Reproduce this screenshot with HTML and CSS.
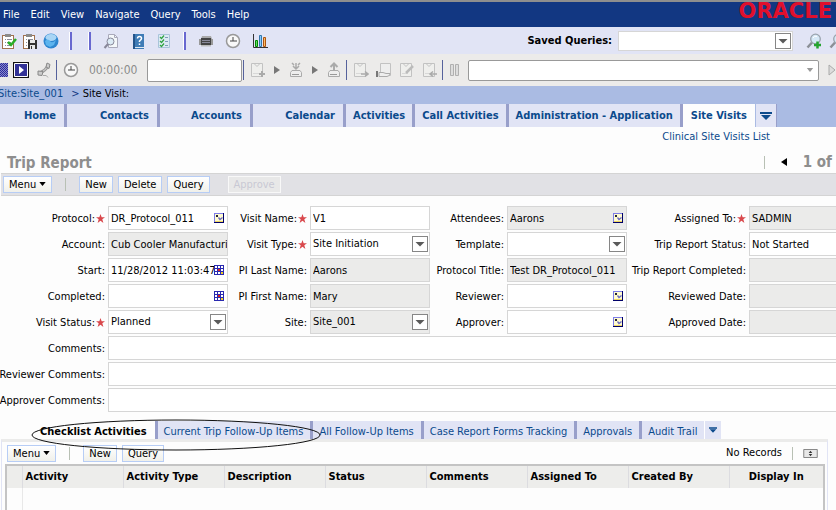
FILE: index.html
```html
<!DOCTYPE html>
<html lang="en">
<head>
    <meta charset="UTF-8">
    <meta name="viewport" content="width=device-width, initial-scale=1.0">
    <title>Site Visits - Trip Report</title>
    <link rel="stylesheet" href="styles.css">
</head>
<body>

    <!-- icon sprites -->
    <svg class="sprites" aria-hidden="true">
        <symbol id="clip" viewBox="0 0 16 16"><rect x="1.5" y="2.5" width="11" height="13" fill="#fff" stroke="#a0714e"/><rect x="4" y="1" width="6" height="3" fill="#8b8b8b"/><path d="M4 6.500h1M6 6.500h5M4 9.500h1M6 9.500h4M4 12.500h1M6 12.500h4" stroke="#8c8c98"/></symbol>
        <symbol id="clock" viewBox="0 0 16 16"><circle cx="8" cy="8" r="6.500" fill="#f8f8f8" stroke="#999" stroke-width="1.500"/><path d="M8 4v4h4M8 8H5" fill="none" stroke="#444"/></symbol>
        <symbol id="lens" viewBox="0 0 16 16"><path d="M1.500 14.500L6 9.500" stroke="#8b8f96" stroke-width="2.500"/><circle cx="9.500" cy="6" r="4.800" fill="#d6e9f7" stroke="#9aa3ad" stroke-width="1.300"/><path d="M7 5a3 3 0 0 1 4-1.500" fill="none" stroke="#fff"/></symbol>
        <symbol id="page" viewBox="0 0 16 16"><path d="M1.500 1.500h11v13h-11z" fill="#efefed" stroke="#c2c2c2"/><path d="M4 1.500l3 3 3-3" fill="none" stroke="#c2c2c2"/><path d="M3 11.500h6" stroke="#d8d8d8"/></symbol>
        <symbol id="tray" viewBox="0 0 16 16"><path d="M2.500 10.500l1.500-2h8l1.500 2v4h-11z" fill="#eee" stroke="#aaa"/><path d="M4 12.500h7" stroke="#999"/></symbol>
        <symbol id="pick" viewBox="0 0 10 10"><rect width="10" height="10" fill="#000068"/><rect width="9" height="9" fill="#7d7de8"/><rect x="1" y="1" width="8" height="8" fill="#fffbd0"/><path d="M2 2h2v2H2z" fill="#223"/><path d="M4.500 4.500l1.500 2 2.500-2" fill="none" stroke="#6a6ac0" stroke-width="1.300"/><path d="M1 8h8v1H1z" fill="#f0d860"/></symbol>
        <symbol id="cal" viewBox="0 0 10 10"><rect width="10" height="10" fill="#2a2ab0"/><path d="M1 1h2v2H1zM4 1h2v2H4zM7 1h2v2H7zM1 4h2v2H1zM7 4h2v2H7zM1 7h2v2H1zM4 7h2v2H4z" fill="#fff"/><path d="M4 4h2v2H4z" fill="#e02020"/><path d="M7 7h2v2H7z" fill="#f3d020"/></symbol>
        <symbol id="drop" viewBox="0 0 16 16"><rect x=".5" y=".5" width="15" height="15" fill="#fff" stroke="#868686"/><path d="M3.500 6h9L8 10.500z" fill="#5a5a5a"/></symbol>
        <symbol id="star" viewBox="0 0 10 10"><path d="M5 0l1.300 3.500H10L7 5.900 8.200 10 5 7.500 1.800 10 3 5.900 0 3.500h3.700z" fill="#d9484c"/></symbol>
        <symbol id="down" viewBox="0 0 8 5"><path d="M0 0h8L4 5z" fill="currentColor"/></symbol>
        <symbol id="more" viewBox="0 0 12 8"><path d="M0 0h12v2H0zM1 3h10L6 8z" fill="#0b4a8c"/></symbol>
        <symbol id="next" viewBox="0 0 6 8"><path d="M0 0l6 4-6 4z" fill="#777"/></symbol>
    </svg>

    <header class="menubar">
        <nav class="menus">
            <a href="#">File</a><a href="#">Edit</a><a href="#">View</a><a href="#">Navigate</a><a href="#">Query</a><a href="#">Tools</a><a href="#">Help</a>
        </nav>
        <span class="brand">ORACLE</span>
    </header>

    <div class="toolbar">
        <div class="group tight">
            <button aria-label="Inbox"><svg viewBox="0 0 16 16"><use href="#clip"/><path d="M7 9l3 3 5-6" fill="none" stroke="#28ae28" stroke-width="2.500"/></svg></button>
            <button aria-label="Save"><svg viewBox="0 0 16 16"><use href="#clip"/><rect x="6" y="7" width="9" height="9" fill="#333"/><path d="M8 7h5v3H8zM8 12h5v4H8z" fill="#e8e8e8"/><path d="M9 13h1v3H9z" fill="#333"/></svg></button>
            <button aria-label="Web"><svg viewBox="0 0 16 16"><circle cx="8" cy="8" r="7.500" fill="#2e86d0"/><ellipse cx="8" cy="4.500" rx="5.500" ry="3.500" fill="#a8d5f5"/><path d="M2 8q3-3 5 0t6-1l-2 5-4 2-4-2z" fill="#5db4ee"/></svg></button>
        </div>
        <i class="bar"></i><i class="bar second"></i>
        <div class="group">
            <button aria-label="Find"><svg viewBox="0 0 16 16"><path d="M5.500 1.500h6l3 3v10h-9z" fill="#f4f8fa" stroke="#aab"/><path d="M11.500 1.500v3h3" fill="none" stroke="#aab"/><circle cx="7.500" cy="8.500" r="3.500" fill="#dcebf5" stroke="#889"/><path d="M5 11l-3.500 4" stroke="#889" stroke-width="2"/></svg></button>
            <button aria-label="Help"><svg viewBox="0 0 16 16"><path d="M3 1h11v15H3z" fill="#3f7cb6"/><path d="M3 1h2v15H3z" fill="#24548a"/><path d="M5 14h9v1H5z" fill="#dfe9f2"/><path d="M7.500 5.500q0-2 2-2t2 2q0 1-2 2.500v1M9.500 10.500v1.500" fill="none" stroke="#fff" stroke-width="1.500"/></svg></button>
            <button aria-label="Tasks"><svg viewBox="0 0 16 16"><path d="M1.500 1.500h11v13h-11z" fill="#dceaf4" stroke="#a9c4da"/><path d="M3 4l1.500 1.500L7 2.500M3 8l1.500 1.500L7 6.500M3 12l1.500 1.500L7 10.500" fill="none" stroke="#2fa440" stroke-width="1.300"/><path d="M8 4.500h3M8 8.500h3M8 12.500h3" stroke="#7d9db8"/></svg></button>
        </div>
        <i class="bar"></i>
        <div class="group">
            <button aria-label="Print"><svg viewBox="0 0 16 16"><path d="M4 3h9l1 3H3z" fill="#aaa"/><path d="M1 6h14v6H1z" fill="#999"/><path d="M3 5h10v7H3z" fill="#444"/><path d="M4 7.500h8M4 9.500h8" stroke="#889"/><path d="M3 12h10v1.500H3z" fill="#bbb"/></svg></button>
            <button aria-label="History"><svg><use href="#clock"/></svg></button>
            <button aria-label="Chart"><svg viewBox="0 0 16 16"><path d="M1.500 1v13.500H16" fill="none" stroke="#333"/><path d="M3.500 7.500h2v6h-2z" fill="#6d6" stroke="#080"/><path d="M7.500 2.500h2v11h-2z" fill="#8cf" stroke="#37a"/><path d="M11.500 4.500h2v9h-2z" fill="#fb6" stroke="#a51"/></svg></button>
        </div>
        <div class="saved">
            <label for="saved">Saved Queries:</label>
            <span class="field saved-field"><select id="saved"><option></option></select><svg class="drop"><use href="#drop"/></svg></span>
            <button aria-label="New query"><svg viewBox="0 0 16 16"><use href="#lens"/><path d="M11.500 8.500v7M8 12h7" stroke="#25a32f" stroke-width="2.500"/></svg></button>
            <button aria-label="Run query"><svg viewBox="0 0 16 16"><use href="#lens"/></svg></button>
        </div>
    </div>

    <div class="toolbar comm">
        <span class="hatch"></span>
        <button aria-label="Start"><svg viewBox="0 0 16 16"><path d="M0 0h16v16H0z" fill="#111"/><path d="M1.500 1.500h13v13h-13z" fill="#323296" stroke="#fff"/><path d="M6 4l5 4-5 4z" fill="#fff"/></svg></button>
        <button aria-label="Phone"><svg viewBox="0 0 16 16"><path d="M4 11Q9 9 12 4" fill="none" stroke="#999" stroke-width="3"/><path d="M4 11Q9 9 12 4" fill="none" stroke="#ddd"/><path d="M11 1l3 1.500-1 4-3-1.500zM2 9l5 .5-1 4-4-.5z" fill="#ccc" stroke="#888"/><path d="M7 13.500q4-1 5 2" fill="none" stroke="#aaa"/></svg></button>
        <i class="line"></i>
        <svg class="ico"><use href="#clock"/></svg>
        <span class="timer">00:00:00</span>
        <input class="box" type="text" aria-label="Dial">
        <i class="line"></i>
        <div class="group comm-group">
            <button aria-label="Accept"><svg viewBox="0 0 16 16"><use href="#page"/><path d="M12 9v6M9 12h6" stroke="#aaa" stroke-width="2"/></svg></button>
            <svg class="next"><use href="#next"/></svg>
            <button aria-label="Receive"><svg viewBox="0 0 16 16"><use href="#tray"/><path d="M8 1v6M5 4l3 3 3-3M4 1l2 2M12 1l-2 2" fill="none" stroke="#aaa" stroke-width="1.500"/></svg></button>
            <svg class="next"><use href="#next"/></svg>
            <button aria-label="Send"><svg viewBox="0 0 16 16"><use href="#tray"/><path d="M8 8V2M4.500 5L8 1.500 11.500 5" fill="none" stroke="#aaa" stroke-width="2"/></svg></button>
        </div>
        <i class="line"></i>
        <div class="group comm-end">
            <button aria-label="Transfer"><svg viewBox="0 0 16 16"><use href="#page"/><path d="M8 12h6M12 9.500l3 2.500-3 2.500" fill="none" stroke="#aaa" stroke-width="1.500"/></svg></button>
            <button aria-label="Hold"><svg viewBox="0 0 16 16"><path d="M4.500 1.500h10v12h-10z" fill="#eee" stroke="#c2c2c2"/><path d="M0 9h2v6H0z" fill="#777"/><path d="M3 10.500h4l3 1h4q1 2-3 3H3z" fill="#eee" stroke="#aaa"/></svg></button>
            <button aria-label="Edit"><svg viewBox="0 0 16 16"><use href="#page"/><path d="M7 11l7-7" stroke="#bbb" stroke-width="2.500"/></svg></button>
            <button aria-label="Return"><svg viewBox="0 0 16 16"><use href="#page"/><path d="M15 12H9M11 9.500L8 12l3 2.500" fill="none" stroke="#aaa" stroke-width="1.500"/></svg></button>
        </div>
        <i class="line"></i>
        <button aria-label="Pause"><svg viewBox="0 0 16 16"><path d="M1.500 2.500h3v11h-3zM6.500 2.500h3v11h-3z" fill="#ddd" stroke="#b0b0b0"/></svg></button>
        <span class="box comm-select"><select aria-label="Work item"><option></option></select><svg class="small-down"><use href="#down"/></svg></span>
        <svg class="resume" viewBox="0 0 8 12"><path d="M1 1l6 5-6 5z" fill="#ddd" stroke="#aaa"/></svg>
    </div>

    <div class="crumbs"><a href="#">Site:Site_001</a> <span>&gt; <b>Site Visit:</b></span></div>

    <nav class="screens">
        <a href="#" class="home">Home</a>
        <a href="#" class="wide">Contacts</a>
        <a href="#" class="wide">Accounts</a>
        <a href="#" class="wide">Calendar</a>
        <a href="#">Activities</a>
        <a href="#">Call Activities</a>
        <a href="#">Administration - Application</a>
        <a href="#" class="active">Site Visits</a>
        <button class="more" aria-label="More screens"><svg><use href="#more"/></svg></button>
    </nav>
    <div class="views"><a href="#">Clinical Site Visits List</a></div>

    <main>
        <div class="title">
            <h1>Trip Report</h1>
            <div class="pager"><i class="thin"></i><button aria-label="Previous record"><svg viewBox="0 0 6 8"><path d="M6 0v8L0 4z"/></svg></button><span>1 of</span></div>
        </div>
        <div class="actions">
            <button class="btn">Menu <svg class="caret"><use href="#down"/></svg></button>
            <i class="thin"></i>
            <button class="btn">New</button>
            <button class="btn">Delete</button>
            <button class="btn">Query</button>
            <button class="btn approve" disabled>Approve</button>
        </div>

        <form class="form">
            <label for="protocol">Protocol:<svg class="star"><use href="#star"/></svg></label>
            <span class="field"><input id="protocol" value="DR_Protocol_011"><svg class="pick"><use href="#pick"/></svg></span>
            <label for="vname">Visit Name:<svg class="star"><use href="#star"/></svg></label>
            <span class="field"><input id="vname" value="V1"></span>
            <label for="attendees">Attendees:</label>
            <span class="field ro"><input id="attendees" value="Aarons" readonly><svg class="pick"><use href="#pick"/></svg></span>
            <label for="assigned">Assigned To:<svg class="star"><use href="#star"/></svg></label>
            <span class="field ro"><input id="assigned" value="SADMIN" readonly></span>

            <label for="account">Account:</label>
            <span class="field ro"><input id="account" value="Cub Cooler Manufacturing" readonly></span>
            <label for="vtype">Visit Type:<svg class="star"><use href="#star"/></svg></label>
            <span class="field"><select id="vtype"><option>Site Initiation</option></select><svg class="drop"><use href="#drop"/></svg></span>
            <label for="template">Template:</label>
            <span class="field"><select id="template"><option></option></select><svg class="drop"><use href="#drop"/></svg></span>
            <label for="tstatus">Trip Report Status:</label>
            <span class="field"><input id="tstatus" value="Not Started"></span>

            <label for="start">Start:</label>
            <span class="field"><input id="start" value="11/28/2012 11:03:47"><svg class="pick"><use href="#cal"/></svg></span>
            <label for="plast">PI Last Name:</label>
            <span class="field ro"><input id="plast" value="Aarons" readonly></span>
            <label for="ptitle">Protocol Title:</label>
            <span class="field ro"><input id="ptitle" value="Test DR_Protocol_011" readonly></span>
            <label for="tdone">Trip Report Completed:</label>
            <span class="field ro"><input id="tdone" readonly></span>

            <label for="completed">Completed:</label>
            <span class="field"><input id="completed"><svg class="pick"><use href="#cal"/></svg></span>
            <label for="pfirst">PI First Name:</label>
            <span class="field ro"><input id="pfirst" value="Mary" readonly></span>
            <label for="reviewer">Reviewer:</label>
            <span class="field"><input id="reviewer"><svg class="pick"><use href="#pick"/></svg></span>
            <label for="rdate">Reviewed Date:</label>
            <span class="field ro"><input id="rdate" readonly></span>

            <label for="vstatus">Visit Status:<svg class="star"><use href="#star"/></svg></label>
            <span class="field"><select id="vstatus"><option>Planned</option></select><svg class="drop"><use href="#drop"/></svg></span>
            <label for="site">Site:</label>
            <span class="field ro"><select id="site"><option>Site_001</option></select><svg class="drop"><use href="#drop"/></svg></span>
            <label for="approver">Approver:</label>
            <span class="field"><input id="approver"><svg class="pick"><use href="#pick"/></svg></span>
            <label for="adate">Approved Date:</label>
            <span class="field ro"><input id="adate" readonly></span>

            <label for="comments">Comments:</label>
            <span class="field full"><input id="comments"></span>
            <label for="rcomments">Reviewer Comments:</label>
            <span class="field full"><input id="rcomments"></span>
            <label for="acomments">Approver Comments:</label>
            <span class="field full"><input id="acomments"></span>
        </form>

        <nav class="tabs">
            <a href="#" class="active">Checklist Activities</a>
            <a href="#">Current Trip Follow-Up Items</a>
            <a href="#">All Follow-Up Items</a>
            <a href="#">Case Report Forms Tracking</a>
            <a href="#">Approvals</a>
            <a href="#" class="last">Audit Trail</a>
            <button class="more" aria-label="More views"><svg><use href="#more"/></svg></button>
            <svg class="callout" viewBox="0 0 290 32"><ellipse cx="145" cy="16" rx="144" ry="15" fill="none" stroke="#111"/></svg>
        </nav>

        <section class="panel">
            <div class="panel-actions">
                <button class="btn">Menu <svg class="caret"><use href="#down"/></svg></button>
                <i class="thin"></i>
                <button class="btn">New</button>
                <button class="btn">Query</button>
                <div class="count">No Records<i class="thin"></i><button aria-label="Show more"><svg viewBox="0 0 16 10"><path d="M.5.5h15v9H.5z" fill="#e8e8e8" stroke="#777"/><path d="M6 4.500L8 2l2 2.500zM6 5.500L8 8l2-2.500z" fill="#333"/></svg></button></div>
            </div>
            <div class="list">
                <table>
                    <thead>
                        <tr>
                            <th class="mark"></th>
                            <th>Activity</th>
                            <th>Activity Type</th>
                            <th>Description</th>
                            <th>Status</th>
                            <th>Comments</th>
                            <th>Assigned To</th>
                            <th>Created By</th>
                            <th class="display">Display In</th>
                        </tr>
                    </thead>
                    <tbody>
                        <tr><td></td><td colspan="8"></td></tr>
                    </tbody>
                </table>
            </div>
        </section>
    </main>

</body>
</html>
```

FILE: styles.css
```css
* { box-sizing: border-box; }
html { height: 100%; }
body { margin: 0; height: 100%; overflow: hidden; display: flex; flex-direction: column; background: #fdfdfd; color: #000; font-family: Tahoma, "DejaVu Sans Condensed", "Noto Sans", sans-serif; font-size: 11px; line-height: 16px; }
a { color: #0b4a8c; text-decoration: none; white-space: nowrap; }
button, input, select { font: inherit; color: inherit; }
button { padding: 0; border: 0; background: none; flex: none; }
button svg, .ico { display: block; width: 16px; height: 16px; flex: none; }
svg { flex: none; }
.sprites { position: absolute; width: 0; height: 0; }

/* top bars */
.menubar { flex: none; display: flex; justify-content: space-between; height: 27px; border-top: 2px solid #8e8e8e; background: #123782; overflow: hidden; }
.menus { display: flex; gap: 11px; padding: 5px 3px; }
.menus a { color: #fff; }
.brand { color: #e0102c; font: bold 21px/18px "DejaVu Sans", sans-serif; padding-right: 4px; }
.toolbar { flex: none; display: flex; align-items: center; height: 27px; padding-left: 1px; background: #e1e4f5; }
.group { display: flex; gap: 11px; }
.tight { gap: 5px; }
.bar { width: 3px; height: 18px; margin: 0 12px 0 10px; border-left: 1px solid #fff; border-right: 2px solid #6868d0; }
.bar.second { margin-left: 4px; }
.saved { display: flex; align-items: center; margin-left: auto; margin-right: -9px; font-weight: bold; }
.saved label { margin-right: 6px; }
.saved button { margin-left: 7px; }
.saved .saved-field { width: 175px; height: 20px; margin-right: 6px; }
.comm { height: 32px; padding-left: 0; background: #ecebea; }
.hatch { width: 8px; height: 14px; margin-right: 5px; background: repeating-conic-gradient(#2c2c9c 0 25%, #8888cc 0 50%) 0 0 / 2px 2px; }
.comm > button + button { margin-left: 7px; }
.line { flex: none; width: 1px; height: 20px; margin: 0 6px 0 4px; background: #56629c; }
.timer { flex: none; width: 68px; padding-left: 10px; color: #8b8b8b; font-size: 12px; }
.box { height: 23px; border: 1px solid #999; border-radius: 2px; background: #fff; }
input.box { flex: none; width: 95px; height: 23px; border: 1px solid #999; background: #fff; }
.box + .line { margin-left: 1px; }
.comm-group { align-items: center; gap: 8px; }
.comm-end { gap: 7px; }
.next { width: 6px; height: 8px; }
.comm-select { display: flex; align-items: center; flex: 1; height: 21px; margin: 0 9px 0 3px; }
.comm-select select { flex: 1; }
.small-down { width: 8px; height: 4px; margin-right: 4px; color: #999; }
.resume { width: 8px; height: 12px; }
.crumbs { flex: none; height: 18px; line-height: 15px; background: #aabbe3; display: flex; gap: 8px; overflow: hidden; color: #123782; }
.crumbs a { margin-left: -2px; }
.crumbs b { font-weight: normal; color: #000; }

/* screen tabs */
.screens { flex: none; display: flex; height: 23px; background: #aabbe3; font-weight: bold; }
.screens a { padding: 0 7px; line-height: 24px; background: #e1e4f5; border-right: 3px solid #989fca; text-align: right; }
.screens .home { min-width: 67px; padding-right: 8px; }
.screens .wide { min-width: 93px; padding-right: 8px; }
.screens .active { padding: 0 8px; background: #fdfdfd; border-right: 0; }
.more { display: flex; align-items: center; justify-content: center; background: #e1e4f5; }
.more svg { width: 12px; height: 8px; }
.screens .more { width: 22px; border-left: 1px solid #aabbe3; border-right: 1px solid #989fca; }
.views { flex: none; height: 24px; padding: 2px 66px 0 0; text-align: right; }

/* trip report */
main { flex: 1; min-height: 0; display: flex; flex-direction: column; }
.title { flex: none; display: flex; justify-content: space-between; height: 22px; color: #8e8e8e; font-weight: bold; font-size: 15px; line-height: 24px; }
h1 { margin: 0 0 0 7px; font-size: 15px; }
.pager { display: flex; align-items: center; padding-right: 4px; gap: 16px; white-space: nowrap; }
.pager svg { width: 6px; height: 8px; }
.thin { flex: none; width: 1px; height: 13px; background: #b8c0b4; }
.actions { flex: none; display: flex; align-items: center; height: 23px; margin-left: 1px; padding-left: 2px; gap: 5px; border-top: 1px solid #d4d4d4; border-bottom: 1px solid #d4d4d4; background: #e1e1e5; }
.btn { height: 17px; padding: 0 5px; border: 1px solid #b7cdf5; background: linear-gradient(#fff, #f0f0ea); line-height: 15px; }
.caret { display: inline-block !important; width: 7px !important; height: 4px !important; margin-bottom: 2px; }
.btn + .thin { margin: 0 8px; }
.btn.approve { margin-left: 13px; border-color: #f8f8f8; background: #e8e8e8; color: #c8c8d4; }
.form { flex: none; display: grid; grid-template-columns: 108px 120px 82px 120px 77px 120px 122px minmax(120px, 1fr); row-gap: 2px; padding-top: 10px; }
.form label { display: flex; align-items: center; justify-content: flex-end; padding: 2px 3px 0 0; white-space: nowrap; }
.star { width: 9px; height: 9px; margin-left: 1px; margin-bottom: 1px; }
.field { display: flex; align-items: center; min-width: 0; height: 24px; border: 1px solid #d6d6d6; background: #fff; }
.ro { background: #ebebea; }
.full { grid-column: span 7; }
input, select { flex: 1; min-width: 0; width: 100%; height: 100%; padding: 0 0 0 2px; border: 0; border-radius: 0; outline: 0; background: transparent; appearance: none; }
.pick { width: 10px; height: 10px; margin-right: 3px; }
.drop { width: 16px; height: 16px; margin-right: 1px; }

/* view tabs and list */
.tabs { flex: none; position: relative; display: flex; height: 18px; margin-top: 9px; padding-left: 33px; }
.tabs a { padding: 0 7px 0 6px; background: #e1e4f5; border-right: 3px solid #989fca; line-height: 22px; }
.tabs .active { padding: 0 8px 0 7px; background: none; color: #000; font-weight: bold; }
.tabs .last { border-right: 1px solid #fff; }
.tabs .more { width: 16px; }
.tabs .more svg { width: 8px; height: 6px; }
.callout { position: absolute; left: 31px; top: -2px; width: 290px; height: 32px; }
.panel { flex: 1; display: flex; flex-direction: column; margin: 0 8px 0 1px; border: solid #e1e4f5; border-width: 3px 1px 0; border-top-color: #ebebea; }
.panel-actions { flex: none; display: flex; align-items: center; height: 22px; padding-left: 5px; gap: 5px; }
.count { display: flex; align-items: center; gap: 10px; margin-left: auto; padding-right: 9px; }
.count button svg { width: 15px; height: 9px; }
.list { flex: 1; margin: 0 2px 0 3px; border: solid #c4c4c4; border-width: 2px 2px 0; }
table { width: 100%; height: 100%; border-collapse: collapse; table-layout: fixed; }
th { height: 22px; padding: 0 3px; border-left: 1px solid #dcdce0; background: #ededeb; text-align: left; white-space: nowrap; }
td { border-left: 1px solid #e8e8e8; }
th:first-child, td:first-child { border-left: 0; }
.mark { width: 15px; }
.display { width: 94px; text-align: center; }
```
